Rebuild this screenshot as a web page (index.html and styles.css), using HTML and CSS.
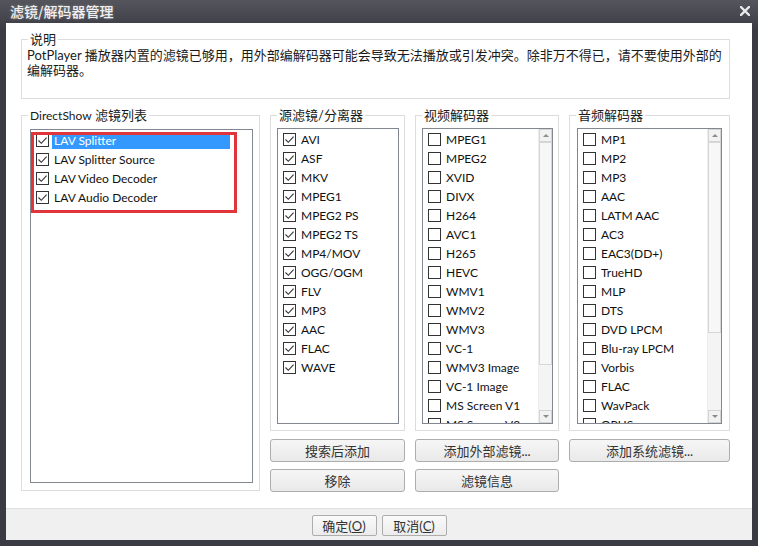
FILE: index.html
```html
<!doctype html>
<html lang="zh-CN">
  <head>
    <meta charset="UTF-8" />
    <title>滤镜/解码器管理</title>
    <link rel="stylesheet" href="styles.css">
  </head>

  <body>
    <div class="window">
      <div class="titlebar">
        <span class="title">滤镜/解码器管理</span>
        <svg class="close" width="10" height="10" viewBox="0 0 10 10">
          <path d="M1 1L9 9M9 1L1 9" stroke="#e8e8ea" stroke-width="2.4" stroke-linecap="square" />
        </svg>
      </div>

      <div class="content">
        <fieldset class="group group-note">
          <legend>说明</legend>
          <p>PotPlayer 播放器内置的滤镜已够用，用外部编解码器可能会导致无法播放或引发冲突。除非万不得已，请不要使用外部的编解码器。</p>
        </fieldset>

        <div class="main">
          <fieldset class="group group-ds">
            <legend><span class="latin">DirectShow</span> 滤镜列表</legend>
            <div class="listbox list-ds">
              <div class="items">
                <div class="item"><span class="check on"></span><span class="label selected">LAV Splitter</span></div>
                <div class="item"><span class="check on"></span><span class="label">LAV Splitter Source</span></div>
                <div class="item"><span class="check on"></span><span class="label">LAV Video Decoder</span></div>
                <div class="item"><span class="check on"></span><span class="label">LAV Audio Decoder</span></div>
              </div>
              <div class="marker"></div>
            </div>
          </fieldset>

          <div class="col col-source">
            <fieldset class="group">
              <legend>源滤镜/分离器</legend>
              <div class="listbox">
                <div class="items">
                  <div class="item"><span class="check on"></span><span class="label">AVI</span></div>
                  <div class="item"><span class="check on"></span><span class="label">ASF</span></div>
                  <div class="item"><span class="check on"></span><span class="label">MKV</span></div>
                  <div class="item"><span class="check on"></span><span class="label">MPEG1</span></div>
                  <div class="item"><span class="check on"></span><span class="label">MPEG2 PS</span></div>
                  <div class="item"><span class="check on"></span><span class="label">MPEG2 TS</span></div>
                  <div class="item"><span class="check on"></span><span class="label">MP4/MOV</span></div>
                  <div class="item"><span class="check on"></span><span class="label">OGG/OGM</span></div>
                  <div class="item"><span class="check on"></span><span class="label">FLV</span></div>
                  <div class="item"><span class="check on"></span><span class="label">MP3</span></div>
                  <div class="item"><span class="check on"></span><span class="label">AAC</span></div>
                  <div class="item"><span class="check on"></span><span class="label">FLAC</span></div>
                  <div class="item"><span class="check on"></span><span class="label">WAVE</span></div>
                </div>
              </div>
            </fieldset>
            <div class="button">搜索后添加</div>
            <div class="button">移除</div>
          </div>

          <div class="col col-video">
            <fieldset class="group">
              <legend>视频解码器</legend>
              <div class="listbox">
                <div class="items">
                  <div class="item"><span class="check"></span><span class="label">MPEG1</span></div>
                  <div class="item"><span class="check"></span><span class="label">MPEG2</span></div>
                  <div class="item"><span class="check"></span><span class="label">XVID</span></div>
                  <div class="item"><span class="check"></span><span class="label">DIVX</span></div>
                  <div class="item"><span class="check"></span><span class="label">H264</span></div>
                  <div class="item"><span class="check"></span><span class="label">AVC1</span></div>
                  <div class="item"><span class="check"></span><span class="label">H265</span></div>
                  <div class="item"><span class="check"></span><span class="label">HEVC</span></div>
                  <div class="item"><span class="check"></span><span class="label">WMV1</span></div>
                  <div class="item"><span class="check"></span><span class="label">WMV2</span></div>
                  <div class="item"><span class="check"></span><span class="label">WMV3</span></div>
                  <div class="item"><span class="check"></span><span class="label">VC-1</span></div>
                  <div class="item"><span class="check"></span><span class="label">WMV3 Image</span></div>
                  <div class="item"><span class="check"></span><span class="label">VC-1 Image</span></div>
                  <div class="item"><span class="check"></span><span class="label">MS Screen V1</span></div>
                  <div class="item"><span class="check"></span><span class="label">MS Screen V2</span></div>
                </div>
                <div class="scrollbar">
                  <div class="sb-btn sb-up"></div>
                  <div class="sb-thumb thumb-video"></div>
                  <div class="sb-track"></div>
                  <div class="sb-btn sb-down"></div>
                </div>
              </div>
            </fieldset>
            <div class="button">添加外部滤镜...</div>
            <div class="button">滤镜信息</div>
          </div>

          <div class="col col-audio">
            <fieldset class="group">
              <legend>音频解码器</legend>
              <div class="listbox">
                <div class="items">
                  <div class="item"><span class="check"></span><span class="label">MP1</span></div>
                  <div class="item"><span class="check"></span><span class="label">MP2</span></div>
                  <div class="item"><span class="check"></span><span class="label">MP3</span></div>
                  <div class="item"><span class="check"></span><span class="label">AAC</span></div>
                  <div class="item"><span class="check"></span><span class="label">LATM AAC</span></div>
                  <div class="item"><span class="check"></span><span class="label">AC3</span></div>
                  <div class="item"><span class="check"></span><span class="label">EAC3(DD+)</span></div>
                  <div class="item"><span class="check"></span><span class="label">TrueHD</span></div>
                  <div class="item"><span class="check"></span><span class="label">MLP</span></div>
                  <div class="item"><span class="check"></span><span class="label">DTS</span></div>
                  <div class="item"><span class="check"></span><span class="label">DVD LPCM</span></div>
                  <div class="item"><span class="check"></span><span class="label">Blu-ray LPCM</span></div>
                  <div class="item"><span class="check"></span><span class="label">Vorbis</span></div>
                  <div class="item"><span class="check"></span><span class="label">FLAC</span></div>
                  <div class="item"><span class="check"></span><span class="label">WavPack</span></div>
                  <div class="item"><span class="check"></span><span class="label">OPUS</span></div>
                </div>
                <div class="scrollbar">
                  <div class="sb-btn sb-up"></div>
                  <div class="sb-thumb thumb-audio"></div>
                  <div class="sb-track"></div>
                  <div class="sb-btn sb-down"></div>
                </div>
              </div>
            </fieldset>
            <div class="button">添加系统滤镜...</div>
          </div>
        </div>
      </div>

      <div class="footer">
        <div class="button button-small">确定(<u>O</u>)</div>
        <div class="button button-small">取消(<u>C</u>)</div>
      </div>
    </div>
  </body>
</html>
```

FILE: styles.css
```css
html,
body {
  width: 100%;
  height: 100%;
  overflow: hidden;
  padding: 0;
  margin: 0;
}

body {
  font-family: Lato, "Noto Sans CJK SC", sans-serif;
  font-size: 13px;
  color: #1a1a1a;
}

.window {
  width: 758px;
  height: 546px;
  box-sizing: border-box;
  display: flex;
  flex-direction: column;
  padding: 0 6px 6px 6px;
  background: linear-gradient(#55565d, #3b3c43 30px, #3a3b42);
}

.titlebar {
  flex: 0 0 23px;
  display: flex;
  align-items: center;
  justify-content: space-between;
  padding: 0 2px 2px 4px;
  box-sizing: border-box;
}

.title {
  font-family: "Noto Sans CJK SC", sans-serif;
  font-size: 14px;
  font-weight: 500;
  color: #f0f0f2;
  text-shadow: 0 0 3px rgba(255, 255, 255, 0.35);
}

.content {
  flex: 0 0 485px;
  box-sizing: border-box;
  background-color: #fff;
  padding: 8px 22px 0 15px;
}

.group {
  margin: 0;
  padding: 0;
  border: 1px solid #dcdcdc;
  min-width: 0;
}

.group legend {
  margin-left: 6px;
  padding: 0 2px;
  line-height: 16px;
}

.latin {
  font-size: 12px;
}

.group-note {
  height: 68px;
  box-sizing: border-box;
}

.group-note p {
  margin: 1px 0 0 5px;
  line-height: 15px;
  width: 700px;
}

.main {
  display: flex;
  gap: 10px;
  margin-top: 8px;
}

.group-ds {
  width: 239px;
  box-sizing: border-box;
  height: 384px;
}

.col {
  display: flex;
  flex-direction: column;
}

.col .group {
  height: 324px;
  box-sizing: border-box;
}

.col-source {
  width: 135px;
}

.col-video {
  width: 144px;
}

.col-audio {
  width: 161px;
}

.listbox {
  position: relative;
  display: flex;
  height: 296px;
  box-sizing: border-box;
  margin: 5px 0 0 6px;
  border: 1px solid #828790;
  background-color: #fff;
  overflow: hidden;
}

.list-ds {
  width: 223px;
  height: 354px;
  margin-left: 8px;
}

.col-source .listbox {
  width: 122px;
}

.col-video .listbox {
  width: 131px;
}

.col-audio .listbox {
  width: 145px;
  margin-left: 7px;
}

.items {
  flex: 1;
  padding: 1px 0 0 5px;
  min-width: 0;
  font-size: 12px;
  color: #111;
}

.item {
  height: 19px;
  display: flex;
  align-items: center;
  white-space: nowrap;
}

.check {
  flex: 0 0 13px;
  height: 13px;
  box-sizing: border-box;
  border: 1px solid #333;
  background-color: #fff;
}

.check.on {
  background: #fff url("data:image/svg+xml;utf8,<svg xmlns='http://www.w3.org/2000/svg' width='11' height='11'><path d='M1.5 5.5L4.3 8.3L9.6 2.6' fill='none' stroke='%23333' stroke-width='1.1'/></svg>") no-repeat center;
}

.label {
  margin-left: 3px;
  padding: 0 2px;
  line-height: 17px;
}

.label.selected {
  width: 174px;
  background-color: #3399ff;
  color: #fff;
}

.marker {
  position: absolute;
  left: 0;
  top: 2px;
  width: 206px;
  height: 81px;
  box-sizing: border-box;
  border: 3px solid #e0353b;
  pointer-events: none;
}

.scrollbar {
  flex: 0 0 13px;
  display: flex;
  flex-direction: column;
  background-color: #f4f4f4;
  border-left: 1px solid #ededed;
}

.sb-btn {
  flex: 0 0 13px;
  box-sizing: border-box;
  border: 1px solid #d4d4d4;
  background-color: #f2f2f2;
  display: flex;
  align-items: center;
  justify-content: center;
}

.sb-up::after,
.sb-down::after {
  content: "";
  border-left: 3px solid transparent;
  border-right: 3px solid transparent;
}

.sb-up::after {
  border-bottom: 3px solid #8c8c8c;
}

.sb-down::after {
  border-top: 3px solid #8c8c8c;
}

.sb-thumb {
  box-sizing: border-box;
  border: 1px solid #d6d6d6;
  background-color: #f7f7f7;
}

.thumb-video {
  flex: 0 0 223px;
}

.thumb-audio {
  flex: 0 0 191px;
}

.sb-track {
  flex: 1;
}

.button {
  height: 23px;
  box-sizing: border-box;
  display: flex;
  align-items: center;
  justify-content: center;
  margin-top: 8px;
  border: 1px solid #adadad;
  border-radius: 3px;
  background: linear-gradient(#f6f6f6, #e9e9e9);
  color: #333;
  user-select: none;
}

.col .button + .button {
  margin-top: 7px;
}

.footer {
  flex: 1;
  display: flex;
  justify-content: center;
  gap: 5px;
  background-color: #f0f0f0;
  border-top: 1px solid #dfdfdf;
  padding-top: 6px;
}

.button-small {
  width: 65px;
  height: 21px;
  margin-top: 0;
  border-radius: 2px;
  background: linear-gradient(#fafafa, #ececec);
}

.button-small u {
  text-underline-offset: 1px;
}
```
